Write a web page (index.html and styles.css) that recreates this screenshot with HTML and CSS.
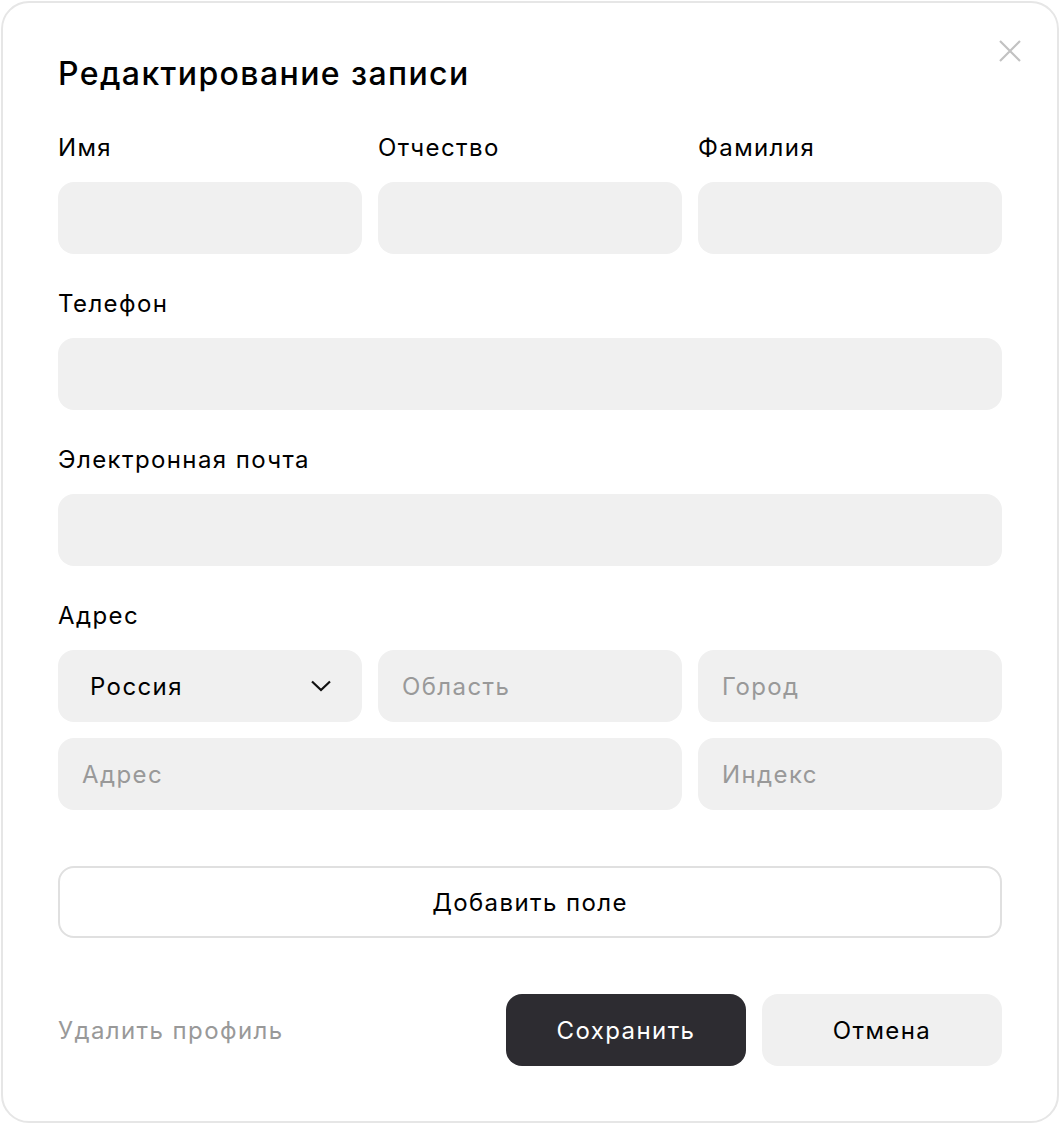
FILE: index.html
```html
<!DOCTYPE html>
<html lang="ru">
<head>
<meta charset="utf-8">
<title>Редактирование записи</title>
<link rel="stylesheet" href="styles.css">
</head>
<body>
<div class="card">
  <button class="close" aria-label="Закрыть">
    <svg width="22" height="22" viewBox="0 0 22 22"><path d="M1 1L21 21M21 1L1 21" stroke="#c2c2c2" stroke-width="2.2" fill="none"/></svg>
  </button>
  <h1 class="title">Редактирование записи</h1>

  <div class="grid3 names">
    <div class="field"><label class="label">Имя</label><div class="input"></div></div>
    <div class="field"><label class="label">Отчество</label><div class="input"></div></div>
    <div class="field"><label class="label">Фамилия</label><div class="input"></div></div>
  </div>

  <div class="field"><label class="label">Телефон</label><div class="input"></div></div>
  <div class="field"><label class="label">Электронная почта</label><div class="input"></div></div>

  <div class="field last">
    <label class="label">Адрес</label>
    <div class="grid3">
      <div class="input select"><span>Россия</span>
        <svg width="22" height="12" viewBox="0 0 22 12"><path d="M2 1.5L11 10L20 1.5" stroke="#111" stroke-width="2.2" fill="none"/></svg>
      </div>
      <div class="input ph">Область</div>
      <div class="input ph">Город</div>
      <div class="input ph span2">Адрес</div>
      <div class="input ph">Индекс</div>
    </div>
  </div>

  <button class="add">Добавить поле</button>

  <div class="footer">
    <a class="delete">Удалить профиль</a>
    <div class="actions">
      <button class="btn primary">Сохранить</button>
      <button class="btn secondary">Отмена</button>
    </div>
  </div>
</div>
</body>
</html>
```
FILE: styles.css
```css
* { box-sizing: border-box; }
html, body { margin: 0; padding: 0; background: #fff; }
body { font-family: Inter, "Noto Sans", sans-serif; color: #000; letter-spacing: 1.4px; }

.card {
  position: relative;
  width: 1058px;
  height: 1122px;
  margin: 1px;
  border: 2px solid #e6e6e6;
  border-radius: 28px;
  padding: 51px 55px 0 55px;
  display: flex;
  flex-direction: column;
}

.close {
  position: absolute;
  top: 37px;
  right: 36px;
  width: 22px;
  height: 22px;
  padding: 0;
  border: 0;
  background: none;
  line-height: 0;
}

.title {
  margin: 0 0 38px 0;
  font-size: 32px;
  line-height: 40px;
  font-weight: 500;
  letter-spacing: 1.4px;
}

.grid3 {
  display: grid;
  grid-template-columns: repeat(3, 1fr);
  column-gap: 16px;
  row-gap: 16px;
}
.names { margin-bottom: 34px; }

.field {
  display: flex;
  flex-direction: column;
  margin-bottom: 34px;
}
.names > .field { margin-bottom: 0; }
.field.last { margin-bottom: 0; }

.label {
  font-size: 24px;
  line-height: 32px;
  margin-bottom: 18px;
}

.input {
  height: 72px;
  background: #f0f0f0;
  border-radius: 16px;
  display: flex;
  align-items: center;
  padding: 0 24px;
  font-size: 24px;
}
.ph { color: #999; }
.span2 { grid-column: span 2; }

.select {
  justify-content: space-between;
  padding: 0 30px 0 32px;
  color: #000;
}

.add {
  margin-top: 56px;
  height: 72px;
  border: 2px solid #e0e0e0;
  border-radius: 16px;
  background: #fff;
  font-family: inherit;
  font-size: 24px;
  letter-spacing: 1.4px;
  color: #000;
}

.footer {
  margin-top: 56px;
  display: flex;
  justify-content: space-between;
  align-items: center;
}
.delete {
  font-size: 24px;
  color: #999;
}
.actions {
  display: flex;
  gap: 16px;
}
.btn {
  width: 240px;
  height: 72px;
  border: 0;
  border-radius: 16px;
  font-family: inherit;
  font-size: 24px;
  letter-spacing: 1.4px;
}
.primary { background: #2d2c31; color: #fff; }
.secondary { background: #f0f0f0; color: #000; }
```
